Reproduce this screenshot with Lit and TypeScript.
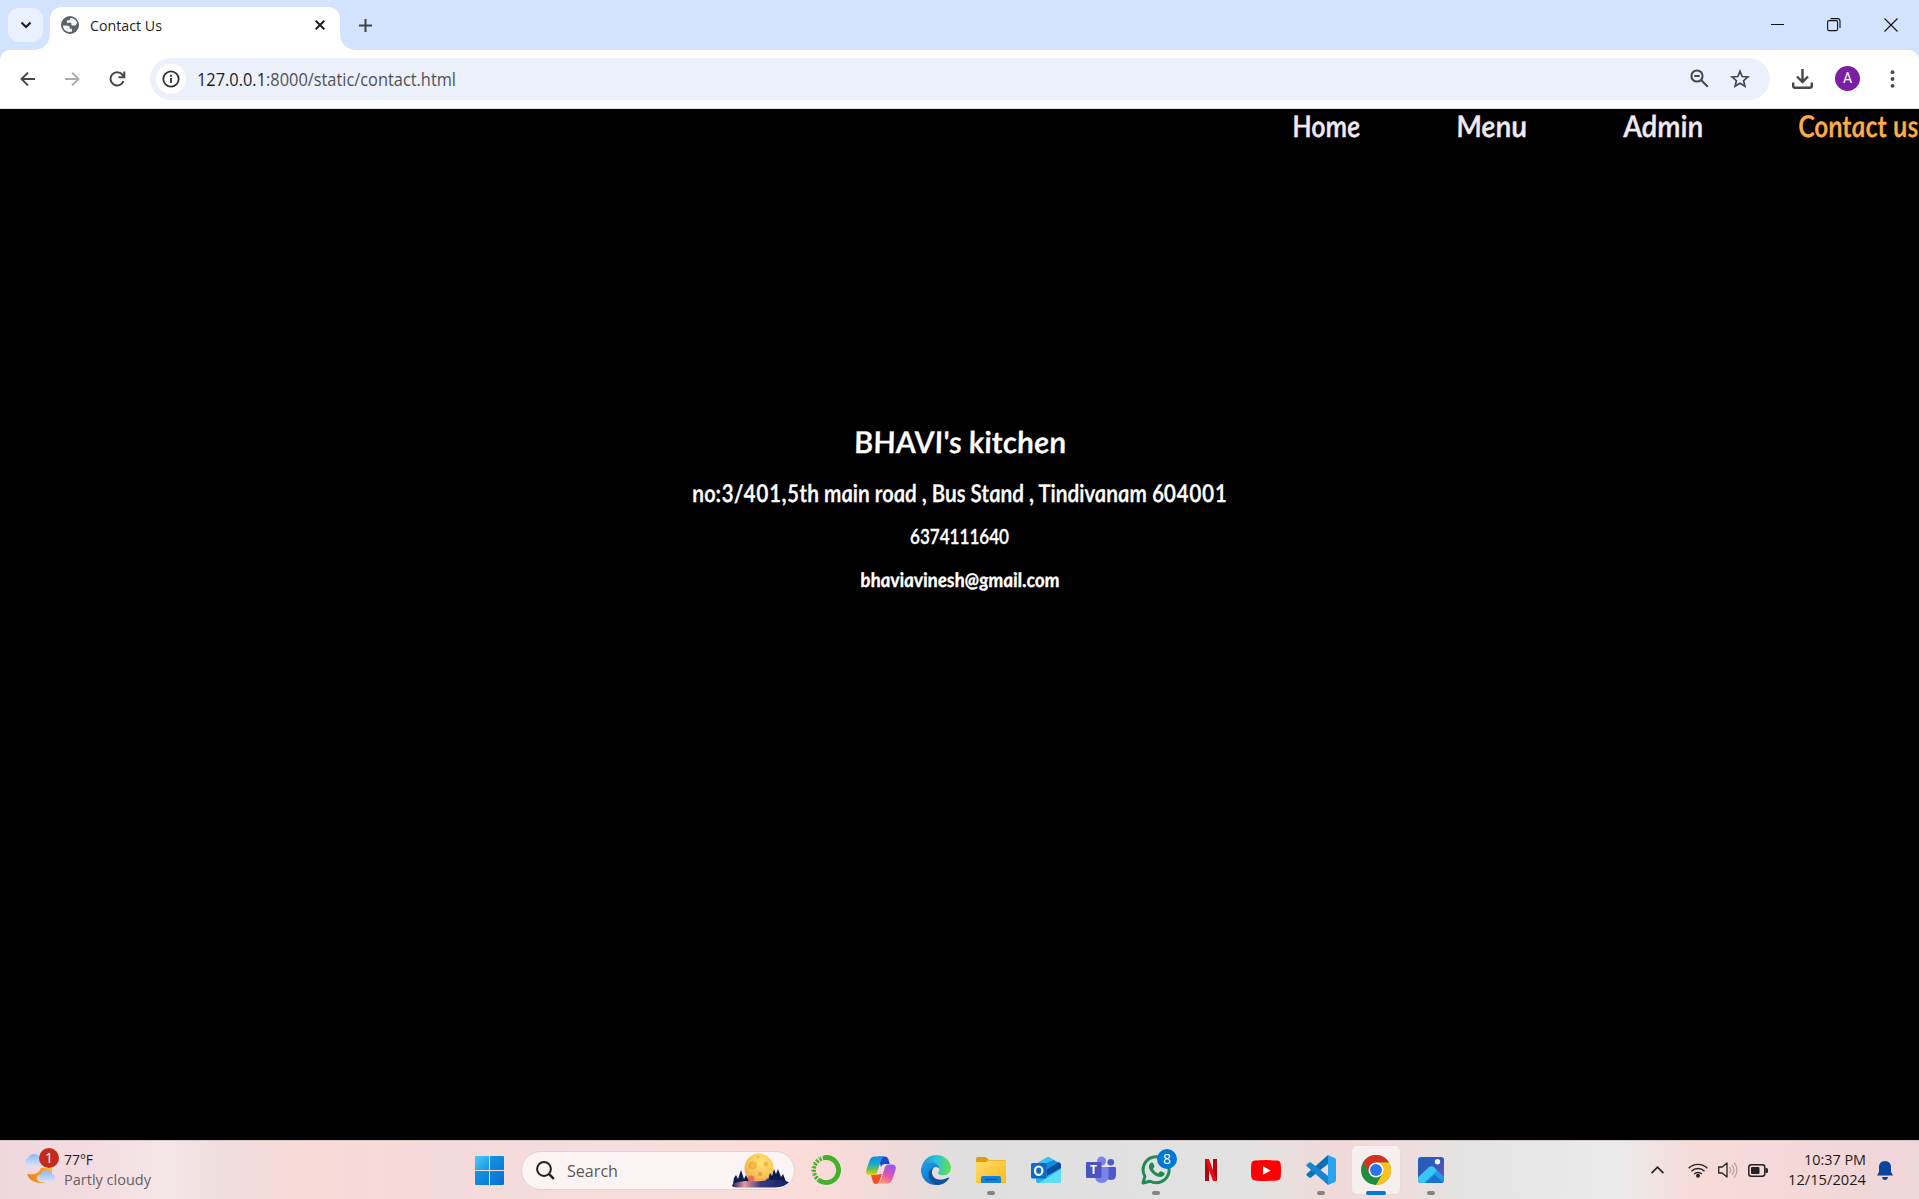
import { LitElement, html, css, svg } from "lit";
import { customElement } from "lit/decorators.js";

type Run = { t: string; cls?: string };

/* One line of live text, fitted to a fixed advance width. */
const line = (runs: string | Run[], w: number, h: number, base: number, cls: string) => {
  const body = typeof runs === "string" ? runs : runs.map((p) => svg`<tspan class=${p.cls ?? ""}>${p.t}</tspan>`);
  return html`<svg class="line ${cls}" width=${w} height=${h} viewBox="0 0 ${w} ${h}">
    <text x="0" y=${base} textLength=${w} lengthAdjust="spacingAndGlyphs">${body}</text>
  </svg>`;
};

const startIcon = html`<svg width="29" height="29" viewBox="0 0 29 29">
  <defs><linearGradient id="st" x1="0" y1="0" x2="1" y2="1" gradientUnits="objectBoundingBox"><stop offset="0" stop-color="#4cc9fb"/><stop offset="1" stop-color="#1593e0"/></linearGradient>
  <linearGradient id="sb" x1="0" y1="0" x2="1" y2="1"><stop offset="0" stop-color="#1ba0e8"/><stop offset="1" stop-color="#0670cf"/></linearGradient></defs>
  <path fill="url(#st)" d="M1 0h13v14H0V1q0-1 1-1z"/><path fill="url(#sb)" d="M15 0h13q1 0 1 1v13H15zM0 15h14v14H1q-1 0-1-1zM15 15h14v13q0 1-1 1H15z"/></svg>`;

const moonIcon = html`<svg width="57" height="36" viewBox="0 0 57 36">
  <defs><radialGradient id="mn" cx=".6" cy=".3" r=".8"><stop offset="0" stop-color="#ffe37a"/><stop offset=".6" stop-color="#f8c552"/><stop offset="1" stop-color="#f0965a"/></radialGradient>
  <linearGradient id="gd"><stop offset="0" stop-color="#1c2258"/><stop offset=".22" stop-color="#e79a9b"/><stop offset=".5" stop-color="#3c3b83"/><stop offset="1" stop-color="#101f5e"/></linearGradient></defs>
  <circle cx="27" cy="16" r="14.5" fill="url(#mn)"/>
  <circle cx="20.5" cy="13.500" r="4" fill="#eba93f"/><circle cx="21.300" cy="13" r="3" fill="#f4b947"/><circle cx="34" cy="12" r="2.400" fill="#f1b746"/><circle cx="28" cy="22" r="2.200" fill="#f09a50"/><circle cx="19" cy="27" r="3.500" fill="#e8705a"/><circle cx="26" cy="5" r="1.600" fill="#f2bd4d"/>
  <path fill="#0d1b4f" d="M1 32l1-6 2-3 2 4 3-9 3 9 2-4 2 4 1 5zM33 31l2-5 1 2 2-7 2 3 2-7 2 5 2-5 3 8 2-3 2 5 2 5z"/>
  <path fill="url(#gd)" d="M0 33q2-3 13-4 12 1 24-1 12-1 20 2-4 5-14 5.500H5q-5 0-5-2.500z"/></svg>`;

const anaconda = html`<svg width="30" height="30" viewBox="0 0 30 30" fill="none" stroke="#43b02a"><path stroke-width="4.800" d="M13.500 2.600a12.500 12.500 0 1 1-5.500 22.700"/><path stroke-width="4.400" stroke-dasharray="2.400 1.200" d="M14 2.600A12.500 12.500 0 0 0 8 25.300"/><path stroke="#f6dfdc" stroke-width="1" stroke-dasharray="1.500 1.300" d="M12 2A13 13 0 0 0 6 25"/></svg>`;

const copilot = html`<svg width="32" height="30" viewBox="0 0 32 30">
  <defs><linearGradient id="c1" x1=".3" y1="0" x2=".3" y2="1"><stop offset="0" stop-color="#118fe8"/><stop offset=".4" stop-color="#17a8cf"/><stop offset=".7" stop-color="#69c251"/><stop offset="1" stop-color="#f2cd0b"/></linearGradient>
  <linearGradient id="c2" x1=".7" y1="0" x2=".3" y2="1"><stop offset="0" stop-color="#8f5ae8"/><stop offset=".5" stop-color="#dc50b8"/><stop offset="1" stop-color="#ff9770"/></linearGradient></defs>
  <path fill="#1a49cf" d="M13 1.500h7q2.500 0 3.300 2.500l1.500 5H20q-3 0-4 3z"/><path fill="#f0522d" d="M8 20l9-1-2.500 7q-1 3-3.500 3-2.500 0-3.200-2.500L6 20z"/>
  <path fill="url(#c1)" d="M9.500 1.500H19q-2 1-3 4l-4 12q-.8 2.500-3 2.500H5q-5 0-3.500-5.500l3-9Q6 1.500 9.500 1.500z"/><path fill="url(#c2)" d="M22.500 28.500H13q2-1 3-4l4-12.500q.8-2.500 3-2.500h4q5 0 3.500 5.500l-3 9q-1.500 4.500-5 4.500z"/></svg>`;

const edge = html`<svg width="30" height="30" viewBox="0 0 30 30">
  <defs><linearGradient id="e1" x1="0" y1=".3" x2="1" y2=".4"><stop offset="0" stop-color="#1b92db"/><stop offset=".5" stop-color="#2dc2dc"/><stop offset="1" stop-color="#62e04b"/></linearGradient>
  <linearGradient id="e2" x1="0" y1="0" x2=".6" y2="1"><stop offset="0" stop-color="#1ba0e2"/><stop offset="1" stop-color="#0d6fd0"/></linearGradient></defs>
  <path fill="url(#e1)" d="M.5 12.500C2 5 8 0 15 0c9 0 15 6.500 15 13 0 4.500-3.500 7.200-7.500 7.200-4 0-5.500-1.500-5.500-2.500s1.400-1.500 1.400-3.700C18.400 11 15 8 10.500 8 5.500 8 2 10 .5 12.500z"/>
  <path fill="url(#e2)" d="M0 15c0-5 5-7.500 10-7.500 5 0 8.400 3 8.400 6.500 0-1-2-2-3.500-2-3 0-5 4-4 8s4 8 8 9.200Q17 30 15 30C7 30 0 24 0 15z"/>
  <path fill="#0c529c" d="M12.500 13c-1.500 1.500-2.300 4-1 7 2 4.500 7 6.500 16 2.500.7-.3 1 .3.500 1C25 28 20.500 30 16.500 30 11 29 7.500 24.500 7.500 20c0-3.500 2-6 5-7z"/></svg>`;

const folder = html`<svg width="30" height="28" viewBox="0 0 30 28"><defs><linearGradient id="f" x1="0" y1="0" x2="1" y2="1"><stop offset="0" stop-color="#ffdc6b"/><stop offset="1" stop-color="#fbb91a"/></linearGradient></defs>
  <path fill="#e09c0b" d="M0 8V3q0-2 2-2h7q1 0 2 1l2 2h15q2 0 2 2v2z"/><path fill="url(#f)" d="M0 6h10l2-1.500h16q2 0 2 1.500v21H0z"/><path fill="#1683d8" d="M5 27v-5q0-2 2-2h16q2 0 2 2v5z"/><path stroke="#0a55a0" stroke-width="1.300" d="M9 23.500h12"/></svg>`;

const outlook = html`<svg width="30" height="28" viewBox="0 0 30 28"><path fill="#29b7ee" d="M5 9L17 1l13 7v17q0 2-2 2H7q-2 0-2-2z"/><path fill="#1488dc" d="M7 7l10-6 11 6-11 7z"/><path fill="#39c0f5" d="M8 6l9-5 6 3-12 5z"/><path fill="#0b4da0" d="M15 14l13-8 2 2v4l-14 8z"/><path fill="#5fdcf8" d="M8 27l22-14v12q0 2-2 2z"/><rect y="7" width="15.500" height="15.500" rx="1.500" fill="#0d6bcb"/><ellipse cx="7.700" cy="14.700" rx="3.700" ry="4.200" fill="none" stroke="#fff" stroke-width="2.200"/></svg>`;

const teams = html`<svg width="30" height="28" viewBox="0 0 30 28"><circle cx="15.500" cy="5" r="4.500" fill="#7b83eb"/><circle cx="24.800" cy="6.200" r="3.300" fill="#5059c9"/><path fill="#5059c9" d="M20 11h9q1 0 1 1v7q0 5-5 5-3 0-4-2z"/><path fill="#7b83eb" d="M9 11h12.500q1 0 1 1v8q0 7-7 7-6.500 0-6.500-7z"/><rect y="6" width="15.500" height="16" rx="1.300" fill="#4b53bc"/><text x="4" y="18.200" class="tl">T</text></svg>`;

const whatsapp = html`<svg width="30" height="30" viewBox="0 0 30 30"><path fill="none" stroke="#1f8a55" stroke-width="3" stroke-linejoin="round" d="M2 28l1.900-6.700A13 13 0 1 1 9 26.200z"/><path fill="#1f8a55" d="M9.500 8q2-1.500 3 .8l1 2.500q.3.800-1.500 2.600 1.500 3 5.200 4.600l1.800-2q.5-.5 1.200-.2l3 1.500q.8.400.3 1.800-1 2.400-4 2.400-5-.2-9-4.800C7 13 7.500 10 9.500 8z"/></svg>`;

const netflix = html`<svg width="12" height="22" viewBox="0 0 12 22"><path fill="#b1060f" d="M0 0h4v22l-4 0zM8 0h4v22H8z"/><path fill="#e50914" d="M0 0h4l8 22H8z"/></svg>`;
const youtube = html`<svg width="30" height="21" viewBox="0 0 30 21"><path fill="#f00" d="M4 .6Q15-.4 26 .6q3.300.3 3.700 3.400.6 6.500 0 13-.4 3.100-3.700 3.400-11 1-22 0Q.7 20.100.3 17q-.6-6.500 0-13Q.7.900 4 .6z"/><path fill="#fff" d="M12 6.200l7.700 4.300-7.700 4.300z"/></svg>`;
const vscode = html`<svg width="30" height="30" viewBox="0 0 30 30"><path fill="#0f6fb3" d="M22 0v9L5 22.500q-.9.700-1.800 0l-2.400-2q-1-.9 0-1.800z"/><path fill="#1486cf" d="M22 30v-9L5 7.500q-.9-.7-1.800 0l-2.400 2q-1 .9 0 1.800z"/><path fill="#29a3ee" d="M22 0l6.800 3q1.200.5 1.200 1.800v20.400q0 1.300-1.200 1.800L22 30z"/></svg>`;
const chrome = html`<svg width="30" height="30" viewBox="0 0 30 30"><circle cx="15" cy="15" r="15" fill="#1e8e3e"/><path fill="#d93025" d="M15 0a15 15 0 0 1 13 7.500H15l-6.500 11.250L2 7.500A15 15 0 0 1 15 0z"/><path fill="#fcc31e" d="M28 7.500A15 15 0 0 1 15 30l6.500-11.250Q23 12 15 7.500z"/><circle cx="15" cy="15" r="7.500" fill="#fff"/><circle cx="15" cy="15" r="6" fill="#2a74ec"/></svg>`;
const photos = html`<svg width="26" height="26" viewBox="0 0 26 26"><defs><linearGradient id="p1" x1="0" y1="0" x2="1" y2="1"><stop offset="0" stop-color="#1763bd"/><stop offset=".5" stop-color="#3a55b4"/><stop offset="1" stop-color="#8650b5"/></linearGradient><linearGradient id="p3" x1="0" y1="0" x2="1" y2="1"><stop offset="0" stop-color="#2aaaf0"/><stop offset="1" stop-color="#1d8fe4"/></linearGradient><clipPath id="pc"><rect width="26" height="26" rx="3"/></clipPath></defs><g clip-path="url(#pc)"><rect width="26" height="26" fill="url(#p1)"/><path fill="url(#p3)" d="M0 20.500L11 10.200q2.500-2 5 0l10 9.600V26H0z"/><path fill="#1873cf" d="M7.500 26l9-8.500 9 8.500z"/><path fill="#35c6f4" d="M0 20.500L11 10.200q2.500-2 5 0l2 2q1 1.200 0 2.300L6 26H0z"/><circle cx="19.500" cy="4.800" r="2.700" fill="#eef3fb"/></g></svg>`;

@customElement("app-root")
export class AppRoot extends LitElement {
  static styles = css`
    :host { display: block; width: 1919px; height: 1199px; overflow: hidden; font-family: "Open Sans", "Noto Sans", sans-serif; background: #000; }
    * { box-sizing: border-box; }
    .window { display: flex; flex-direction: column; height: 1199px; }
    svg { display: block; flex: none; }
    .line { overflow: visible; }
    .line text { white-space: pre; }

    .tabs { display: flex; height: 50px; background: #d3e3fd; padding-left: 8px; flex: none; }
    .search-tabs { width: 35px; height: 34px; margin-top: 8px; border-radius: 11px; background: #e9f0fe; display: grid; place-items: center; }
    .tab { position: relative; display: flex; align-items: center; width: 290px; height: 43px; margin: 7px 0 0 7px; padding: 0 15px 7px 11px; border-radius: 12px 12px 0 0; background: #fff; }
    .tab::before, .tab::after { content: ""; position: absolute; bottom: 0; width: 15px; height: 15px; }
    .tab::before { left: -15px; background: radial-gradient(circle at 0 0, transparent 14.500px, #fff 15px); }
    .tab::after { right: -15px; background: radial-gradient(circle at 100% 0, transparent 14.500px, #fff 15px); }
    .tab .line { margin-left: 11px; }
    .tab .x { margin-left: auto; }
    .plus { margin: 19px 0 0 19px; }
    .controls { display: flex; gap: 43px; margin: 18px 21px 0 auto; }
    .title { font-size: 14.500px; fill: #1f1f1f; }

    .toolwrap { background: #d3e3fd; height: 59px; flex: none; }
    .toolbar { display: flex; align-items: center; height: 59px; padding: 0 22px 1px 20px; background: #fff; border-radius: 10px 10px 0 0; border-bottom: 1px solid #dfe1e5; }
    .fwd { margin-left: 30px; }
    .reload { margin-left: 29px; }
    .omnibox { display: flex; align-items: center; width: 1620px; height: 42px; margin-left: 24px; padding: 0 20px 0 6px; border-radius: 21px; background: #ebf0fa; }
    .info { display: grid; place-items: center; width: 30px; height: 30px; border-radius: 50%; background: #fff; }
    .url { font-size: 17.500px; fill: #505256; margin-left: 11px; }
    .url .host { fill: #1f1f1f; }
    .zoomout { margin-left: auto; }
    .star { margin-left: 21px; }
    .download { margin-left: 22px; }
    .avatar { display: grid; place-items: center; width: 25px; height: 25px; margin-left: 22px; border-radius: 50%; background: #7b1fa2; color: #fff; font: 14px/25px Roboto, sans-serif; }
    .more { margin-left: auto; }

    .page { flex: 1; background: #000; font-family: Lato, "Open Sans", sans-serif; }
    .links { display: flex; justify-content: flex-end; gap: 96px; height: 40px; }
    .script { font-style: italic; font-weight: 600; fill: #fff; stroke: #fff; stroke-width: .35px; }
    .script text { transform: translateX(1px) skewX(6deg); transform-box: fill-box; transform-origin: 0 80%; }
    .nav { font-size: 30px; fill: #f1e9f2; stroke: #f1e9f2; }
    .current { fill: #ffac4a; stroke: #ffac4a; }
    .current text { transform: skewX(6deg); }
    .contact { display: flex; flex-direction: column; align-items: center; padding-top: 271px; }
    .h1 { font-size: 30px; }
    .h2 { font-size: 24.500px; }
    .h3 { font-size: 21px; font-style: normal; }
    .h3 text { transform: none; }
    .h4 { font-size: 20px; font-weight: 700; }

    .taskbar { display: flex; align-items: center; height: 59px; flex: none; border-top: 1px solid #d9c8ca; padding-right: 26px;
      background: linear-gradient(90deg, #efd8dd 0, #f3dce1 90px, #f5e6e8 165px, #efdddd 225px, #f8dad6 300px, #f4dadb 470px, #f5dedc 600px, #fbdcd8 810px, #efdad9 900px, #dfdfdf 960px, #e2e2e2 1250px, #efdad9 1335px, #efdcdc 1400px, #e4e3e3 1460px, #ebebeb 1620px, #f6dbd9 1690px, #f5d9d8 1780px, #efd5d9 1919px); }
    .weather { display: flex; align-items: center; width: 475px; padding-left: 25px; gap: 8px; }
    .wicon { position: relative; width: 31px; height: 36px; }
    .badge { position: absolute; width: 20px; height: 20px; border-radius: 50%; color: #fff; font-size: 14px; line-height: 20px; text-align: center; }
    .red { left: 14px; top: -4px; background: #c42b1c; }
    .blue { right: -6px; top: -6px; background: #0078d4; }
    .small { font-size: 15px; fill: #1b1a1a; }
    .soft { fill: #655f60; }
    .search { display: flex; align-items: center; width: 274px; height: 39px; margin: 0 3.500px 0 17px; padding: 0 5px 0 14px; border-radius: 20px; border: 1px solid #e3cfce; background: #fcf4f4; }
    .query { font-size: 17px; fill: #5c5858; margin-left: 12px; }
    .moon { margin-left: auto; }
    .apps { display: flex; }
    .app { position: relative; display: grid; place-items: center; width: 55px; height: 59px; }
    .plate { display: grid; place-items: center; width: 48px; height: 48px; border-radius: 5px; }
    .plate.on { background: #f7efee; box-shadow: 0 0 0 1px #e9dada; }
    .art { position: relative; }
    .mark { position: absolute; bottom: 5px; left: 23.500px; width: 8px; height: 4px; border-radius: 2px; background: #868383; }
    .mark.wide { left: 17.500px; width: 20px; background: #0078d4; }
    .tl { font: bold 12px "Open Sans", sans-serif; fill: #fff; }
    .tray { display: flex; align-items: center; margin-left: auto; }
    .wifi { margin-left: 24px; }
    .vol, .bat { margin-left: 10px; }
    .clock { display: flex; flex-direction: column; align-items: flex-end; margin: 0 11px 0 20px; }
  `;

  private apps = [
    { art: anaconda }, { art: copilot }, { art: edge }, { art: folder, open: true }, { art: outlook }, { art: teams },
    { art: whatsapp, open: true, badge: "8" }, { art: netflix }, { art: youtube }, { art: vscode, open: true },
    { art: chrome, active: true }, { art: photos, open: true },
  ] as { art: unknown; open?: boolean; active?: boolean; badge?: string }[];

  render() {
    return html`<div class="window">
      <div class="tabs">
        <div class="search-tabs"><svg width="12" height="8" viewBox="0 0 12 8" fill="none" stroke="#1f1f1f" stroke-width="2.200"><path d="M1.500 1.500L6 6l4.500-4.500"/></svg></div>
        <div class="tab">
          <svg width="18" height="18" viewBox="0 0 18 18"><circle cx="9" cy="9" r="9" fill="#5f6368"/><path fill="#fff" d="M2 9.500l5 .2q1.800.2 1.800 1.800v1.300h2.200v2.800Q8 16.800 5 15 2 13 2 9.500zM10.800 2q-2.300 0-2.300 2.300H6.800q-1 0-1 1.200v1.300h4.500v1.800q0 1 1.200 1h2.300q1.200 0 1.400-1.300 1.500-1 .5-2.800-1.500-2.500-4.900-3.500z" opacity=".95"/></svg>
          ${line("Contact Us", 72, 20, 15.5, "title")}
          <svg class="x" width="10" height="10" viewBox="0 0 10 10" stroke="#1f1f1f" stroke-width="2"><path d="M.7.7l8.600 8.600M9.300.7L.7 9.300"/></svg>
        </div>
        <svg class="plus" width="13" height="13" viewBox="0 0 13 13" stroke="#3f4246" stroke-width="2"><path d="M6.500 0v13M0 6.500h13"/></svg>
        <div class="controls">
          <svg width="13" height="13" viewBox="0 0 13 13" stroke="#111"><path d="M0 6.500h13"/></svg>
          <svg width="14" height="14" viewBox="0 0 14 14" fill="none" stroke="#111" stroke-width="1.100"><rect x=".6" y="2.600" width="10" height="10" rx="1.500"/><path d="M3.500.6h7q2.500 0 2.500 2.500v7"/></svg>
          <svg width="14" height="14" viewBox="0 0 14 14" stroke="#111" stroke-width="1.100"><path d="M.5.500l13 13M13.500.500l-13 13"/></svg>
        </div>
      </div>
      <div class="toolwrap"><div class="toolbar">
        <svg width="15" height="14" viewBox="0 0 15 14" fill="none" stroke="#474747" stroke-width="1.900"><path d="M15 7H1.500M8 .6L1.500 7 8 13.400"/></svg>
        <svg class="fwd" width="15" height="14" viewBox="0 0 15 14" fill="none" stroke="#adadad" stroke-width="1.900"><path d="M0 7h13.500M7 .6L13.500 7 7 13.400"/></svg>
        <svg class="reload" width="17" height="16" viewBox="0 0 17 16" fill="none" stroke="#474747" stroke-width="2"><path d="M14.500 10.200A6.700 6.700 0 1 1 13.300 3.500L15 5.500"/><path d="M15.300.5v5.800H9.500"/></svg>
        <div class="omnibox">
          <div class="info"><svg width="18" height="18" viewBox="0 0 18 18" fill="none" stroke="#303134" stroke-width="1.800"><circle cx="9" cy="9" r="7.700"/><path d="M9 8v5M9 4.800v1.900"/></svg></div>
          ${line([{ t: "127.0.0.1", cls: "host" }, { t: ":8000/static/contact.html" }], 259, 24, 18.5, "url")}
          <svg class="zoomout" width="19" height="19" viewBox="0 0 19 19" fill="none" stroke="#474747" stroke-width="2"><circle cx="7" cy="7" r="5.600"/><path d="M11 11l6.800 6.800M4.300 7h5.400"/></svg>
          <svg class="star" width="20" height="19" viewBox="0 0 20 19" fill="none" stroke="#474747" stroke-width="1.700"><path d="M10 2.300l2.200 5.200 5.700.5-4.300 3.700 1.300 5.500L10 14.300l-4.900 2.900 1.300-5.500L2.100 8l5.700-.5z"/></svg>
        </div>
        <svg class="download" width="21" height="20" viewBox="0 0 21 20" fill="none" stroke="#474747" stroke-width="2.400"><path d="M10.500 0v12M5 7.500l5.500 5.500L16 7.500M1.200 13.500v3.300q0 2 2 2h14.600q2 0 2-2v-3.300"/></svg>
        <div class="avatar">A</div>
        <svg class="more" width="9" height="18" viewBox="0 0 9 18" fill="#474747"><circle cx="4.500" cy="2.200" r="1.900"/><circle cx="4.500" cy="9" r="1.900"/><circle cx="4.500" cy="15.800" r="1.900"/></svg>
      </div></div>
      <div class="page">
        <div class="links">
          ${line("Home", 68, 40, 28, "script nav")}${line("Menu", 71, 40, 28, "script nav")}${line("Admin", 80, 40, 28, "script nav")}${line("Contact us", 120, 40, 28, "script nav current")}
        </div>
        <div class="contact">
          ${line("BHAVI's kitchen", 212, 52, 33.5, "script h1")}
          ${line("no:3/401,5th main road , Bus Stand , Tindivanam 604001", 535, 44, 30, "script h2")}
          ${line("6374111640", 99, 44, 28, "script h3")}
          ${line("bhaviavinesh@gmail.com", 199, 40, 27, "script h4")}
        </div>
      </div>
      <div class="taskbar">
        <div class="weather">
          <div class="wicon">
            <svg width="31" height="36" viewBox="0 0 31 36"><defs><linearGradient id="cl" x1="0" y1="0" x2="0" y2="1"><stop offset="0" stop-color="#8fb6f0"/><stop offset="1" stop-color="#d5e4fb"/></linearGradient><linearGradient id="mo"><stop offset="0" stop-color="#e87c1c"/><stop offset="1" stop-color="#fbbd2b"/></linearGradient></defs>
              <path fill="url(#cl)" d="M4 14q-4-.5-4-4t3.500-4Q4.500 2 9 2t6 4q4 1 3.500 8z"/><path fill="url(#mo)" d="M2 22q11 2 14-6h11v10q-4 5-13 5Q5 30 2 22z"/><path fill="url(#cl)" d="M16 30q-4-.5-4-4t4-3.700q1.500-4 5.500-4t5.500 4q3.500.7 3 4.200-.5 3.200-4 3.500z"/></svg>
            <div class="badge red">1</div>
          </div>
          <div>${line("77°F", 29, 20, 15, "small")}${line("Partly cloudy", 87, 20, 15, "small soft")}</div>
        </div>
        ${startIcon}
        <div class="search">
          <svg width="19" height="19" viewBox="0 0 19 19" fill="none" stroke="#222" stroke-width="2"><circle cx="8" cy="8" r="6.900"/><path stroke-width="2.500" d="M12.800 12.800l5 5"/></svg>
          ${line("Search", 51, 24, 18.5, "query")}
          <div class="moon">${moonIcon}</div>
        </div>
        <div class="apps">${this.apps.map((a) => html`<div class="app"><div class="plate ${a.active ? "on" : ""}"><div class="art">${a.art}${a.badge ? html`<div class="badge blue">${a.badge}</div>` : ""}</div></div>${a.open || a.active ? html`<div class="mark ${a.active ? "wide" : ""}"></div>` : ""}</div>`)}</div>
        <div class="tray">
          <svg width="13" height="8" viewBox="0 0 13 8" fill="none" stroke="#222" stroke-width="1.700"><path d="M.6 7.200l5.900-6 5.900 6"/></svg>
          <svg class="wifi" width="20" height="16" viewBox="0 0 20 16" fill="none" stroke="#222" stroke-width="1.400"><path d="M.7 6.300a13 13 0 0 1 18.600 0M3.500 9.200a9.200 9.200 0 0 1 13 0M6.200 12a5.400 5.400 0 0 1 7.600 0"/><circle cx="10" cy="13.800" r="1.300" fill="#222"/></svg>
          <svg class="vol" width="20" height="18" viewBox="0 0 20 18" fill="none" stroke="#222" stroke-width="1.300"><path stroke-linejoin="round" d="M.7 6v6h3.500L9 16V2L4.200 6z"/><path stroke="#b5a5a5" d="M11.500 6q2.200 3 0 6M14 3.800q4 5.200 0 10.400M16.200 1.500q5.500 7.500 0 15"/></svg>
          <svg class="bat" width="20" height="13" viewBox="0 0 20 13"><rect x=".8" y=".8" width="16" height="11.400" rx="2.500" fill="none" stroke="#222" stroke-width="1.500"/><rect x="3" y="3" width="8.500" height="7" rx="1" fill="#222"/><path fill="#222" d="M17.500 4h1q1.500 0 1.500 1.500v2Q20 9 18.500 9h-1z"/></svg>
          <div class="clock">${line("10:37 PM", 62, 20, 15, "small")}${line("12/15/2024", 78, 20, 15, "small")}</div>
          <svg width="16" height="19" viewBox="0 0 16 19" fill="#0a459b"><path d="M8 0q6 0 6 6.500V11l2 3.500H0L2 11V6.500Q2 0 8 0zM5 16h6q-.5 3-3 3t-3-3z"/></svg>
        </div>
      </div>
    </div>`;
  }
}
